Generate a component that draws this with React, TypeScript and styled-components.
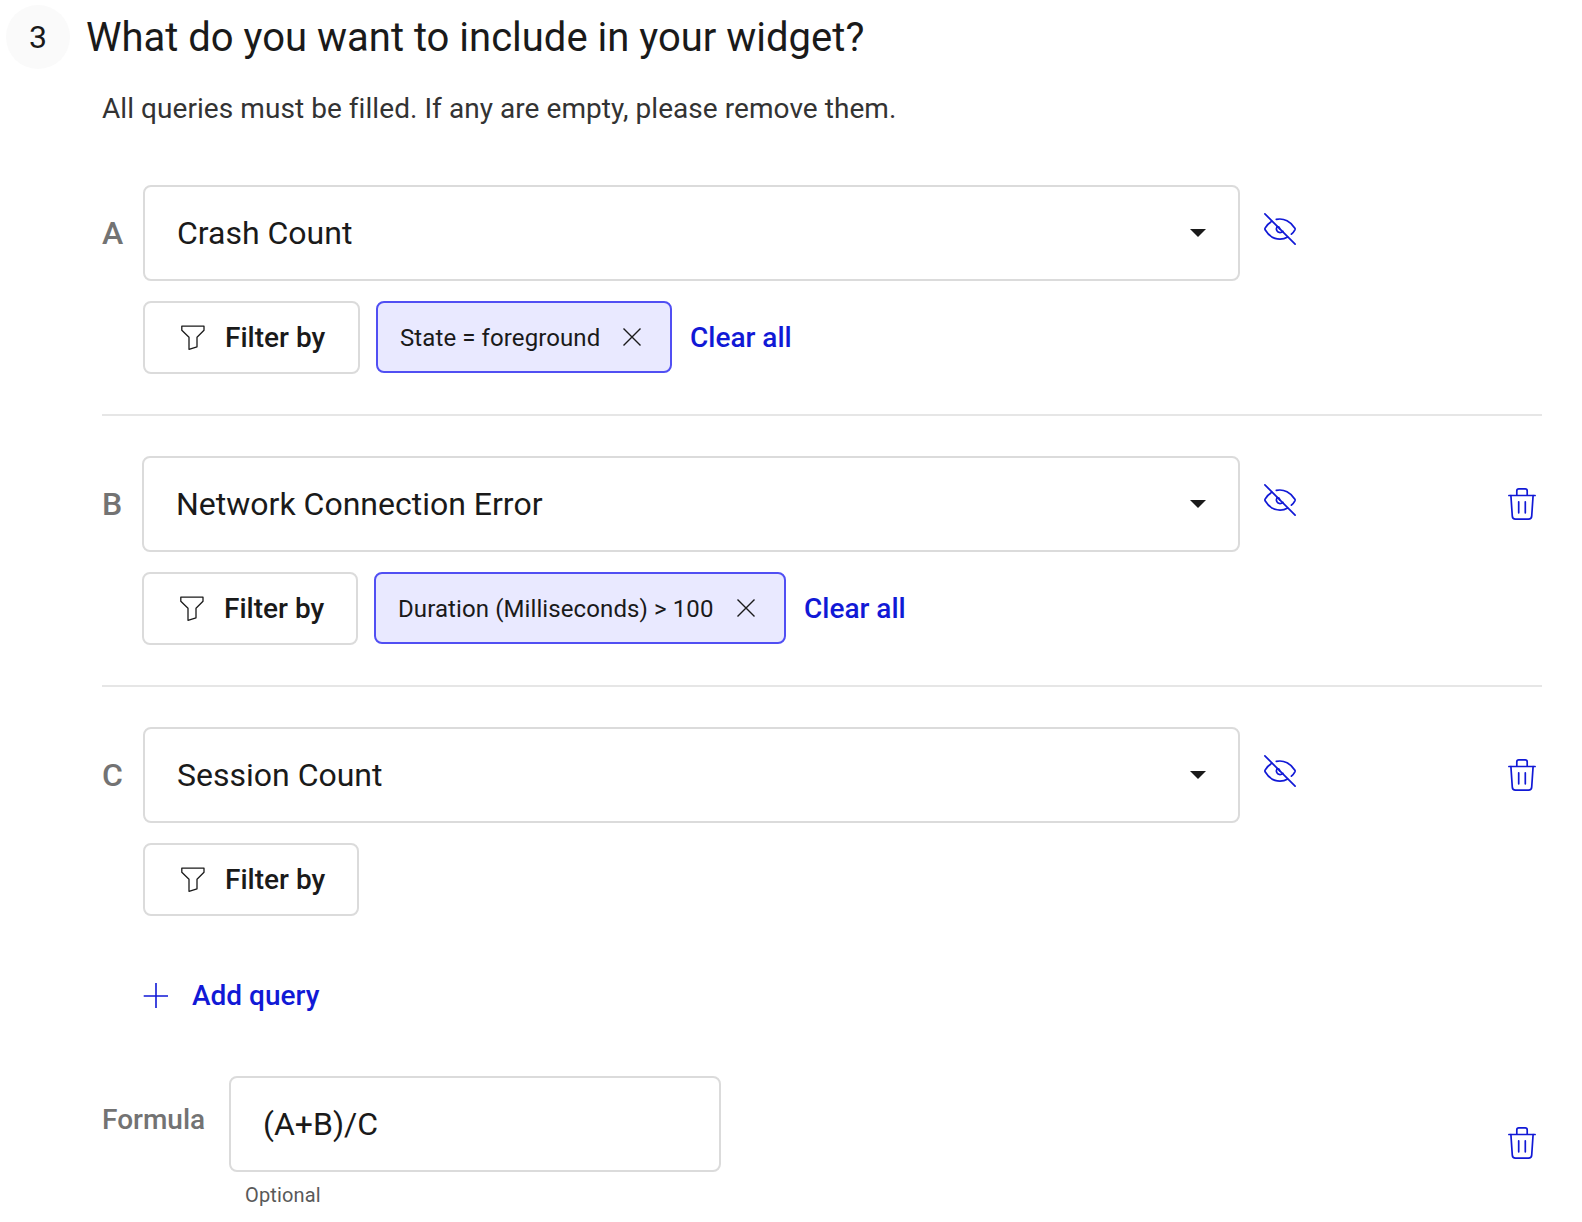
import React from "react";
import styled, { createGlobalStyle } from "styled-components";

const ink = "#1a1a1a";
const blue = "#1119d6";
const line = "#dbdbdb";

const Global = createGlobalStyle`
  *, *::before, *::after { box-sizing: border-box; }
  body { margin: 0; background: #fff; color: ${ink}; font-family: Roboto, "Liberation Sans", sans-serif; -webkit-font-smoothing: antialiased; }
  button, input { font: inherit; color: inherit; margin: 0; }
  svg { display: block; flex: none; }
`;

const Page = styled.main`
  width: 1582px;
  height: 1222px;
  padding: 5px 40px 0 6px;
  overflow: hidden;
`;
const Header = styled.header`
  display: flex;
  align-items: flex-start;
  gap: 16px;
  height: 64px;
`;
const Step = styled.span`
  width: 64px;
  height: 64px;
  border-radius: 50%;
  background: #fafafa;
  font-size: 32px;
  line-height: 64px;
  text-align: center;
`;
const Title = styled.h1`
  margin: 0;
  font-size: 40px;
  line-height: 66px;
  font-weight: 400;
`;
const Body = styled.div`
  padding-left: 96px;
`;
const Hint = styled.p`
  margin: 20px 0 56px;
  font-size: 28px;
  line-height: 40px;
  letter-spacing: 0.06px;
  color: #333;
`;
const Query = styled.section`
  & + & {
    margin-top: 40px;
    padding-top: 40px;
    border-top: 2px solid #e6e6e6;
  }
`;
const QueryRow = styled.div`
  display: flex;
`;
const Letter = styled.span<{ $width: number }>`
  width: ${(p) => p.$width}px;
  flex: none;
  font-size: 32px;
  font-weight: 500;
  line-height: 96px;
  color: #737373;
`;
const Fields = styled.div`
  flex: 1;
`;
const FieldLine = styled.div`
  display: flex;
  align-items: center;
  height: 96px;
`;
const Select = styled.button<{ $width: number }>`
  display: flex;
  align-items: center;
  justify-content: space-between;
  flex: none;
  width: ${(p) => p.$width}px;
  height: 96px;
  padding: 0 32px;
  border: 2px solid ${line};
  border-radius: 8px;
  background: #fff;
  font-size: 32px;
  text-align: left;
`;
const IconButton = styled.button<{ $kind: "eye" | "trash" }>`
  display: flex;
  padding: 0;
  border: 0;
  background: none;
  color: ${blue};
  margin: ${(p) => (p.$kind === "eye" ? "0 0 8px 24px" : "0 6px 0 auto")};
`;
const Filters = styled.div`
  display: flex;
  align-items: flex-start;
  height: 73px;
  margin-top: 20px;
`;
const FilterButton = styled.button<{ $width: number }>`
  display: flex;
  align-items: center;
  width: ${(p) => p.$width}px;
  height: 73px;
  padding: 0 0 0 36px;
  gap: 20px;
  border: 2px solid ${line};
  border-radius: 8px;
  background: #fff;
  font-size: 28px;
  font-weight: 500;
`;
const Chip = styled.span<{ $width: number }>`
  display: flex;
  align-items: center;
  justify-content: space-between;
  width: ${(p) => p.$width}px;
  height: 72px;
  margin-left: 16px;
  padding: 0 29px 0 22px;
  border: 2px solid #514ff3;
  border-radius: 8px;
  background: #e9e9ff;
  font-size: 24px;
  letter-spacing: 0.1px;
`;
const ChipText = styled.span`
  padding-top: 2px;
`;
const TextButton = styled.button`
  display: flex;
  align-items: center;
  height: 72px;
  padding: 0;
  border: 0;
  background: none;
  color: ${blue};
  font-size: 28px;
  font-weight: 500;
`;
const ClearAll = styled(TextButton)`
  margin-left: 18px;
`;
const AddQuery = styled(TextButton)`
  gap: 24px;
  margin: 43px 0 45px 41px;
`;
const FormulaRow = styled.div`
  display: flex;
  align-items: center;
`;
const FormulaLabel = styled.label`
  align-self: flex-start;
  width: 127px;
  font-size: 28px;
  font-weight: 500;
  line-height: 88px;
  color: #737373;
`;
const FormulaField = styled.div`
  display: flex;
  flex-direction: column;
`;
const FormulaInput = styled.input`
  width: 492px;
  height: 96px;
  padding: 0 32px;
  border: 2px solid ${line};
  border-radius: 8px;
  font-size: 32px;
`;
const Helper = styled.span`
  margin: 6px 0 0 16px;
  height: 32px;
  font-size: 20px;
  line-height: 34px;
  letter-spacing: 0.15px;
  color: #595959;
`;

const FunnelIcon = () => (
  <svg width="24" height="26" viewBox="0 0 24 26" fill="none" stroke="currentColor" strokeWidth="1.3" strokeLinejoin="round">
    <path d="M.8 1.2H23V5.2L16 12.3V21.8L8 24.4V12.3L.8 5.2Z" />
  </svg>
);
const CrossIcon = () => (
  <svg width="18" height="18" viewBox="0 0 18 18" fill="none" stroke="currentColor" strokeWidth="1.4">
    <path d="M.5.5 17.5 17.5M17.5.5.5 17.5" />
  </svg>
);
const CaretIcon = () => (
  <svg width="16" height="8" viewBox="0 0 16 8" fill="currentColor">
    <path d="M0 0H16L8 8Z" />
  </svg>
);
const PlusIcon = () => (
  <svg width="25" height="26" viewBox="0 0 25 26" fill="none" stroke="currentColor" strokeWidth="1.6">
    <path d="M13 1V26M.7 14H25" />
  </svg>
);
const EyeOffIcon = () => (
  <svg width="32" height="32" viewBox="0 0 32 32" fill="none" stroke="currentColor" strokeWidth="1.7" strokeLinecap="round">
    <path d="M.9.9 31.1 31.1" />
    <path d="M7.8 8.3C5 10 2.6 12.6 1.1 15.2Q.7 16 1.1 16.8C4.500 22.500 10 26.200 16 26.200C18.800 26.200 21.500 25.400 23.700 24.100" />
    <path d="M12.300 6.400C20 4.700 27 8.700 30.900 15.200Q31.300 16 30.900 16.800C30 18.500 28.700 20 27.400 21.200" />
    <path d="M13 13.600C11.500 16.500 13 19.700 16 19.700C17.200 19.700 18.300 19.100 19 18.300M13 13.600C14 13.600 15.600 14 15.600 15.800" />
  </svg>
);
const TrashIcon = () => (
  <svg width="28" height="32" viewBox="0 0 28 32" fill="none" stroke="currentColor" strokeWidth="1.7" strokeLinecap="round" strokeLinejoin="round">
    <path d="M.9 7.500H27.100M8.800 7.500V2.900Q8.800.9 10.800.9H17.200Q19.200.9 19.200 2.900V7.500" />
    <path d="M2.900 7.500 4.300 28.100Q4.500 31.100 7.500 31.100H20.500Q23.500 31.100 23.700 28.100L25.100 7.500M10.700 13.800V24.800M17.300 13.800V24.800" />
  </svg>
);

type QueryData = {
  letter: string;
  labelWidth: number;
  metric: string;
  filterWidth: number;
  filter?: string;
  chipWidth?: number;
  removable?: boolean;
};
const queries: QueryData[] = [
  { letter: "A", labelWidth: 41, metric: "Crash Count", filterWidth: 217, filter: "State = foreground", chipWidth: 296 },
  { letter: "B", labelWidth: 40, metric: "Network Connection Error", filterWidth: 216, filter: "Duration (Milliseconds) > 100", chipWidth: 412, removable: true },
  { letter: "C", labelWidth: 41, metric: "Session Count", filterWidth: 216, removable: true },
];

const DeleteButton = () => (
  <IconButton $kind="trash" aria-label="Delete">
    <TrashIcon />
  </IconButton>
);

export default function App() {
  return (
    <>
      <Global />
      <Page>
        <Header>
          <Step>3</Step>
          <Title>What do you want to include in your widget?</Title>
        </Header>
        <Body>
          <Hint>All queries must be filled. If any are empty, please remove them.</Hint>
          {queries.map((q) => (
            <Query key={q.letter}>
              <QueryRow>
                <Letter $width={q.labelWidth}>{q.letter}</Letter>
                <Fields>
                  <FieldLine>
                    <Select $width={1138 - q.labelWidth}>
                      {q.metric}
                      <CaretIcon />
                    </Select>
                    <IconButton $kind="eye" aria-label="Hide">
                      <EyeOffIcon />
                    </IconButton>
                    {q.removable && <DeleteButton />}
                  </FieldLine>
                  <Filters>
                    <FilterButton $width={q.filterWidth}>
                      <FunnelIcon />
                      Filter by
                    </FilterButton>
                    {q.filter && (
                      <>
                        <Chip $width={q.chipWidth!}>
                          <ChipText>{q.filter}</ChipText>
                          <CrossIcon />
                        </Chip>
                        <ClearAll>Clear all</ClearAll>
                      </>
                    )}
                  </Filters>
                </Fields>
              </QueryRow>
            </Query>
          ))}
          <AddQuery>
            <PlusIcon />
            Add query
          </AddQuery>
          <FormulaRow>
            <FormulaLabel htmlFor="formula">Formula</FormulaLabel>
            <FormulaField>
              <FormulaInput id="formula" defaultValue="(A+B)/C" />
              <Helper>Optional</Helper>
            </FormulaField>
            <DeleteButton />
          </FormulaRow>
        </Body>
      </Page>
    </>
  );
}
